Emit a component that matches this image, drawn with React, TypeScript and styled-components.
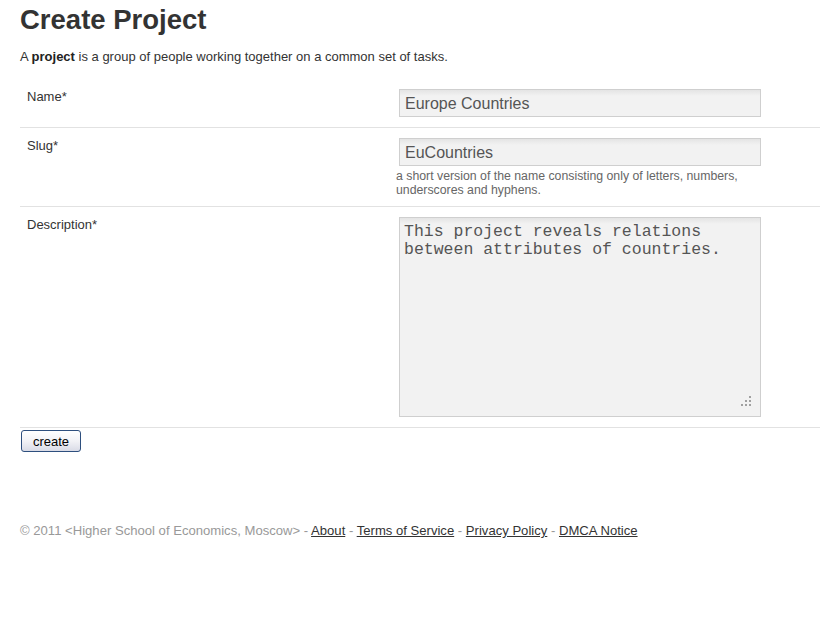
import React from "react";
import styled, { createGlobalStyle } from "styled-components";

const Global = createGlobalStyle`
  html, body { margin: 0; padding: 0; background: #fff; }
  body { font-family: "Liberation Sans", Arial, sans-serif; color: #333; }
`;

const Page = styled.div`
  padding: 0 0 0 20px;
  width: 800px;
`;

const Title = styled.h1`
  margin: 0;
  padding-top: 4px;
  font-size: 27.5px;
  line-height: 31px;
  font-weight: bold;
  color: #333;
`;

const Intro = styled.p`
  margin: 14px 0 0 0;
  font-size: 13px;
  line-height: 16px;
  color: #333;
  strong { color: #222; }
`;

const Form = styled.form`
  margin-top: 14px;
`;

const Row = styled.div`
  display: grid;
  grid-template-columns: 376px 1fr;
  padding: 10px 0 10px 0;
  border-bottom: 1px solid #e2e2e2;
`;

const Label = styled.label`
  padding: 0 0 0 7px;
  font-size: 13px;
  line-height: 16px;
  color: #333;
`;

const Field = styled.div`
  display: flex;
  flex-direction: column;
`;

const TextInput = styled.input`
  box-sizing: border-box;
  margin: 0 0 0 3px;
  width: 362px;
  height: 28px;
  padding: 2px 5px 0 5px;
  border: 1px solid #cfcfcf;
  background: linear-gradient(#e4e4e4 0px, #f2f2f2 6px, #f2f2f2 100%);
  font-family: "Liberation Sans", Arial, sans-serif;
  font-size: 16px;
  color: #555;
  outline: none;
`;

const Help = styled.div`
  margin: 3px 0 -1px 0;
  width: 360px;
  font-size: 12.3px;
  line-height: 14px;
  color: #666;
`;

const AreaWrap = styled.div`
  position: relative;
  margin-left: 3px;
  width: 362px;
  height: 200px;
`;

const Area = styled.textarea`
  box-sizing: border-box;
  display: block;
  margin: 0;
  width: 362px;
  height: 200px;
  padding: 5px 4px;
  border: 1px solid #cfcfcf;
  background: linear-gradient(#e4e4e4 0px, #f2f2f2 6px, #f2f2f2 100%);
  font-family: "Liberation Mono", "Courier New", monospace;
  font-size: 16.5px;
  line-height: 18px;
  color: #555;
  resize: none;
  outline: none;
`;

const Grip = styled.svg`
  position: absolute;
  right: 9px;
  bottom: 10px;
  width: 11px;
  height: 11px;
  pointer-events: none;
`;

const Button = styled.button`
  margin: 2px 0 0 1px;
  width: 60px;
  height: 22px;
  padding: 0;
  border: 1px solid #2e4f7e;
  border-radius: 3px;
  background: linear-gradient(#ffffff 0%, #f2f2f6 50%, #d9dbe6 100%);
  font-family: "Liberation Sans", Arial, sans-serif;
  font-size: 13px;
  color: #000;
`;

const Footer = styled.div`
  margin-top: 71px;
  font-size: 13.1px;
  line-height: 16px;
  color: #999;
`;

const FooterLink = styled.a`
  color: #333;
  text-decoration: underline;
`;

export default function App() {
  return (
    <>
      <Global />
      <Page>
        <Title>Create Project</Title>
        <Intro>
          A <strong>project</strong> is a group of people working together on a common set of tasks.
        </Intro>
        <Form onSubmit={(e) => e.preventDefault()}>
          <Row>
            <Label>Name*</Label>
            <Field>
              <TextInput defaultValue="Europe Countries" />
            </Field>
          </Row>
          <Row>
            <Label>Slug*</Label>
            <Field>
              <TextInput defaultValue="EuCountries" />
              <Help>a short version of the name consisting only of letters, numbers, underscores and hyphens.</Help>
            </Field>
          </Row>
          <Row>
            <Label>Description*</Label>
            <Field>
              <AreaWrap>
                <Area defaultValue={"This project reveals relations between attributes of countries."} />
                <Grip viewBox="0 0 11 11">
                  <g fill="#a0a0a0">
                    <rect x="8" y="0" width="2" height="2" />
                    <rect x="4" y="4" width="2" height="2" />
                    <rect x="8" y="4" width="2" height="2" />
                    <rect x="0" y="8" width="2" height="2" />
                    <rect x="4" y="8" width="2" height="2" />
                    <rect x="8" y="8" width="2" height="2" />
                  </g>
                </Grip>
              </AreaWrap>
            </Field>
          </Row>
          <Button type="submit">create</Button>
        </Form>
        <Footer>
          © 2011 &lt;Higher School of Economics, Moscow&gt; - <FooterLink href="#">About</FooterLink> -{" "}
          <FooterLink href="#">Terms of Service</FooterLink> - <FooterLink href="#">Privacy Policy</FooterLink> -{" "}
          <FooterLink href="#">DMCA Notice</FooterLink>
        </Footer>
      </Page>
    </>
  );
}
